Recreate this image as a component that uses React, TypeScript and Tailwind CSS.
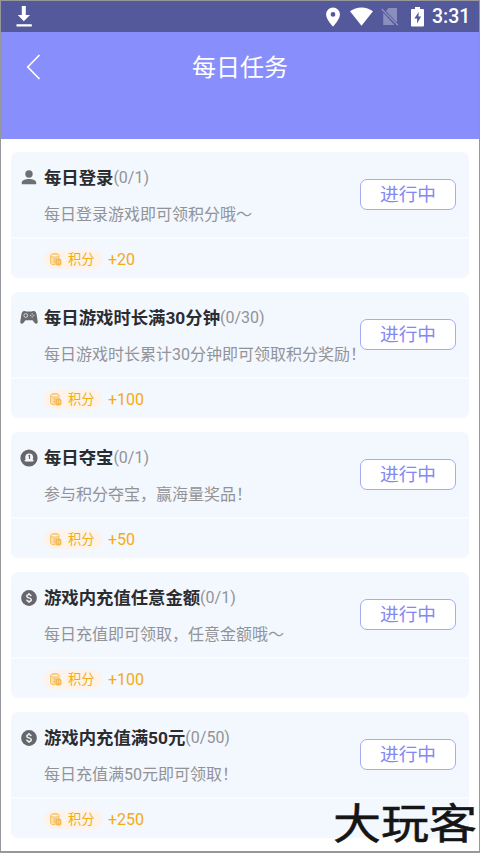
import type { ReactNode } from 'react';

const PersonIcon = () => (
  <svg className="h-[15px] w-[16px]" viewBox="0 0 16 15" fill="#6e6f72">
    <circle cx="8" cy="4" r="3.700" />
    <path d="M.8 14.300v-1.700C.8 10 4.300 8.900 8 8.900s7.200 1.100 7.200 3.700v1.700z" />
  </svg>
);

const GamepadIcon = () => (
  <svg className="h-[15px] w-[18px]" viewBox="0 0 18 15">
    <path d="M4.400 1C2.400 1 1.800 2.500 1.300 5L.3 11.400c-.3 2.300 2 3 3.200 1.300l2-2.400h7l2 2.400c1.200 1.700 3.500 1 3.200-1.300L16.700 5c-.5-2.500-1.100-4-3.100-4-1 0-1.300.5-2.200.5H6.600C5.700 1.500 5.400 1 4.400 1z" fill="#6a6b6e" />
    <circle cx="5.800" cy="5.500" r="1.900" fill="none" stroke="#d3d6da" strokeWidth="1" />
    <g fill="#c9ccd1">
      <circle cx="12.200" cy="4" r=".7" />
      <circle cx="12.200" cy="7" r=".7" />
      <circle cx="10.700" cy="5.500" r=".7" />
      <circle cx="13.700" cy="5.500" r=".7" />
    </g>
  </svg>
);

const TreasureIcon = () => (
  <svg className="h-[18px] w-[18px]" viewBox="0 0 18 18">
    <circle cx="9" cy="9" r="8.600" fill="#66676a" />
    <circle cx="9.200" cy="8.300" r="3.900" fill="#f4f7fb" />
    <rect x="4.600" y="10.500" width="9" height="1.900" rx=".9" fill="#f4f7fb" />
    <path d="M8.400 7l1.100-.6v3.700" fill="none" stroke="#66676a" strokeWidth="1.200" />
  </svg>
);

const DollarIcon = () => (
  <svg className="h-[16px] w-[16px]" viewBox="0 0 16 16">
    <circle cx="8" cy="8" r="7.900" fill="#66676a" />
    <path d="M10.200 6.100C10 5 9.100 4.600 8 4.600c-1.300 0-2.200.6-2.200 1.600 0 2.300 4.500 1.100 4.500 3.500 0 1.100-1 1.700-2.300 1.700s-2.200-.6-2.400-1.700M8 3.100v1.500M8 11.400v1.500" fill="none" stroke="#f4f7fb" strokeWidth="1.400" />
  </svg>
);

const CoinsIcon = () => (
  <svg className="h-[13px] w-[12px]" viewBox="0 0 12 13">
    <path d="M.7 2.500v7.800c0 .9 2 1.500 4.300 1.500V6h4V2.500C9 .2.700.2.700 2.500z" fill="#fce3b6" stroke="#f5bd5c" strokeWidth="1" />
    <ellipse cx="4.850" cy="2.500" rx="4.100" ry="1.600" fill="#fff0d8" stroke="#f5bd5c" strokeWidth=".9" />
    <path d="M2.800 5.500c.8.400 1.500.5 2.400.5M2.800 8.300c.8.400 1.500.5 2.400.5" stroke="#f5bd5c" fill="none" />
    <rect x="5.500" y="5.700" width="5.900" height="6.800" rx="1.800" fill="#f5b953" />
    <path d="M7.600 7.500v3M9.400 7.500v3" stroke="#ffe6bd" strokeWidth=".7" />
  </svg>
);

type Task = { icon: ReactNode; title: string; progress: string; text: string; points: string };

const tasks: Task[] = [
  { icon: <PersonIcon />, title: '每日登录', progress: '(0/1)', text: '每日登录游戏即可领积分哦～', points: '+20' },
  { icon: <GamepadIcon />, title: '每日游戏时长满30分钟', progress: '(0/30)', text: '每日游戏时长累计30分钟即可领取积分奖励！', points: '+100' },
  { icon: <TreasureIcon />, title: '每日夺宝', progress: '(0/1)', text: '参与积分夺宝，赢海量奖品！', points: '+50' },
  { icon: <DollarIcon />, title: '游戏内充值任意金额', progress: '(0/1)', text: '每日充值即可领取，任意金额哦～', points: '+100' },
  { icon: <DollarIcon />, title: '游戏内充值满50元', progress: '(0/50)', text: '每日充值满50元即可领取！', points: '+250' },
];

function TaskCard({ icon, title, progress, text, points }: Task) {
  return (
    <section className="h-[126px] rounded-[7px] bg-[#f3f7fe]">
      <div className="flex h-[87px] border-b-2 border-[#fbfcff]">
        <div className="flex h-[51px] w-[33px] shrink-0 items-center justify-center pl-[2px]">{icon}</div>
        <div className="min-w-0 grow pt-[13px] whitespace-nowrap">
          <div className="flex h-[26px] items-center">
            <h2 className="text-[17.35px] leading-[26px] font-bold text-[#2b2c30]">{title}</h2>
            <span className="text-[16px] leading-[26px] text-[#929397]">{progress}</span>
          </div>
          <p className="mt-[12px] text-[16px] leading-[24px] text-[#929397]">{text}</p>
        </div>
        <button className="mt-[27px] mr-[13px] h-[31px] w-[96px] shrink-0 rounded-[7px] border border-[#a9aaf2] bg-white pt-px text-[18.7px] leading-[28px] text-[#8489ef]">
          进行中
        </button>
      </div>
      <div className="flex h-[39px] items-center pt-px pl-[33px] text-[#f4ab13]">
        <span className="flex h-[19px] w-[58px] items-center gap-[6px] rounded-full bg-[#fdf3ea] pl-[6px] text-[13.3px] leading-[19px]">
          <CoinsIcon />
          积分
        </span>
        <span className="ml-[6px] pt-px text-[16px] leading-[20px]">{points}</span>
      </div>
    </section>
  );
}

export default function App() {
  return (
    <div className="relative h-[853px] w-[480px] overflow-hidden border border-b-2 border-[#96979b] bg-white font-[Roboto,'Noto_Sans_CJK_SC',sans-serif]">
      <div className="flex h-[31px] items-center bg-[#54599b] text-white">
        <svg className="ml-[15px] h-[21px] w-[16px]" viewBox="0 0 16 21" fill="white">
          <path d="M5.800 0h4v9H14l-6.200 6.200L1.800 9h4zM.500 18.200h15.300v2.200H.500z" />
        </svg>
        <svg className="ml-[294px] h-[20px] w-[14px]" viewBox="0 0 14 20" fill="white">
          <path fillRule="evenodd" d="M7 .5a6.900 6.900 0 0 0-6.900 6.900C.1 12.300 7 19.500 7 19.500s6.900-7.200 6.900-12.100A6.900 6.900 0 0 0 7 .5zm0 9.300a2.400 2.400 0 1 1 0-4.800 2.400 2.400 0 0 1 0 4.800z" />
        </svg>
        <svg className="ml-[10px] h-[19px] w-[23px]" viewBox="0 0 23 19" fill="white">
          <path d="M0 4.200C6.500-.9 16.500-.9 23 4.200L11.500 18.700z" />
        </svg>
        <svg className="ml-[8px] h-[19px] w-[18px]" viewBox="0 0 18 19">
          <path d="M7.500 1h8.500v14.500L5 4zM2.200 5.800 13.500 18H2.200z" fill="#8b8fbd" />
          <path d="m.700 2 16.200 16.200" stroke="#8b8fbd" strokeWidth="1.500" />
        </svg>
        <svg className="ml-[12px] h-[20px] w-[13px]" viewBox="0 0 13 20">
          <path d="M1 2h3V0h5v2h3q1 0 1 1v15.500q0 1-1 1H1q-1 0-1-1V3q0-1 1-1z" fill="white" />
          <path d="M7.700 5 3.300 11.500h2.800v5l4-7H7.500z" fill="#54599b" />
        </svg>
        <span className="ml-[8px] pt-px text-[19.500px] font-medium leading-[30px]">3:31</span>
      </div>
      <header className="flex h-[107px] bg-[#888ffd] text-white">
        <svg className="mt-[22px] ml-[25px] h-[26px] w-[15px]" viewBox="0 0 15 26" fill="none" stroke="white" strokeWidth="1.700">
          <path d="M13.500 1 1.800 13l11.700 12" />
        </svg>
        <h1 className="ml-[151px] text-[24px] leading-[73px]">每日任务</h1>
      </header>
      <main className="flex flex-col gap-[14px] px-[10px] pt-[13px]">
        {tasks.map((task) => (
          <TaskCard key={task.title} {...task} />
        ))}
      </main>
      <div className="absolute top-[796px] left-[332px] scale-y-[.88] text-[48px] leading-[56px] font-normal whitespace-nowrap text-[#151515] [-webkit-text-stroke:0.6px_#151515]">
        大玩客
      </div>
    </div>
  );
}
